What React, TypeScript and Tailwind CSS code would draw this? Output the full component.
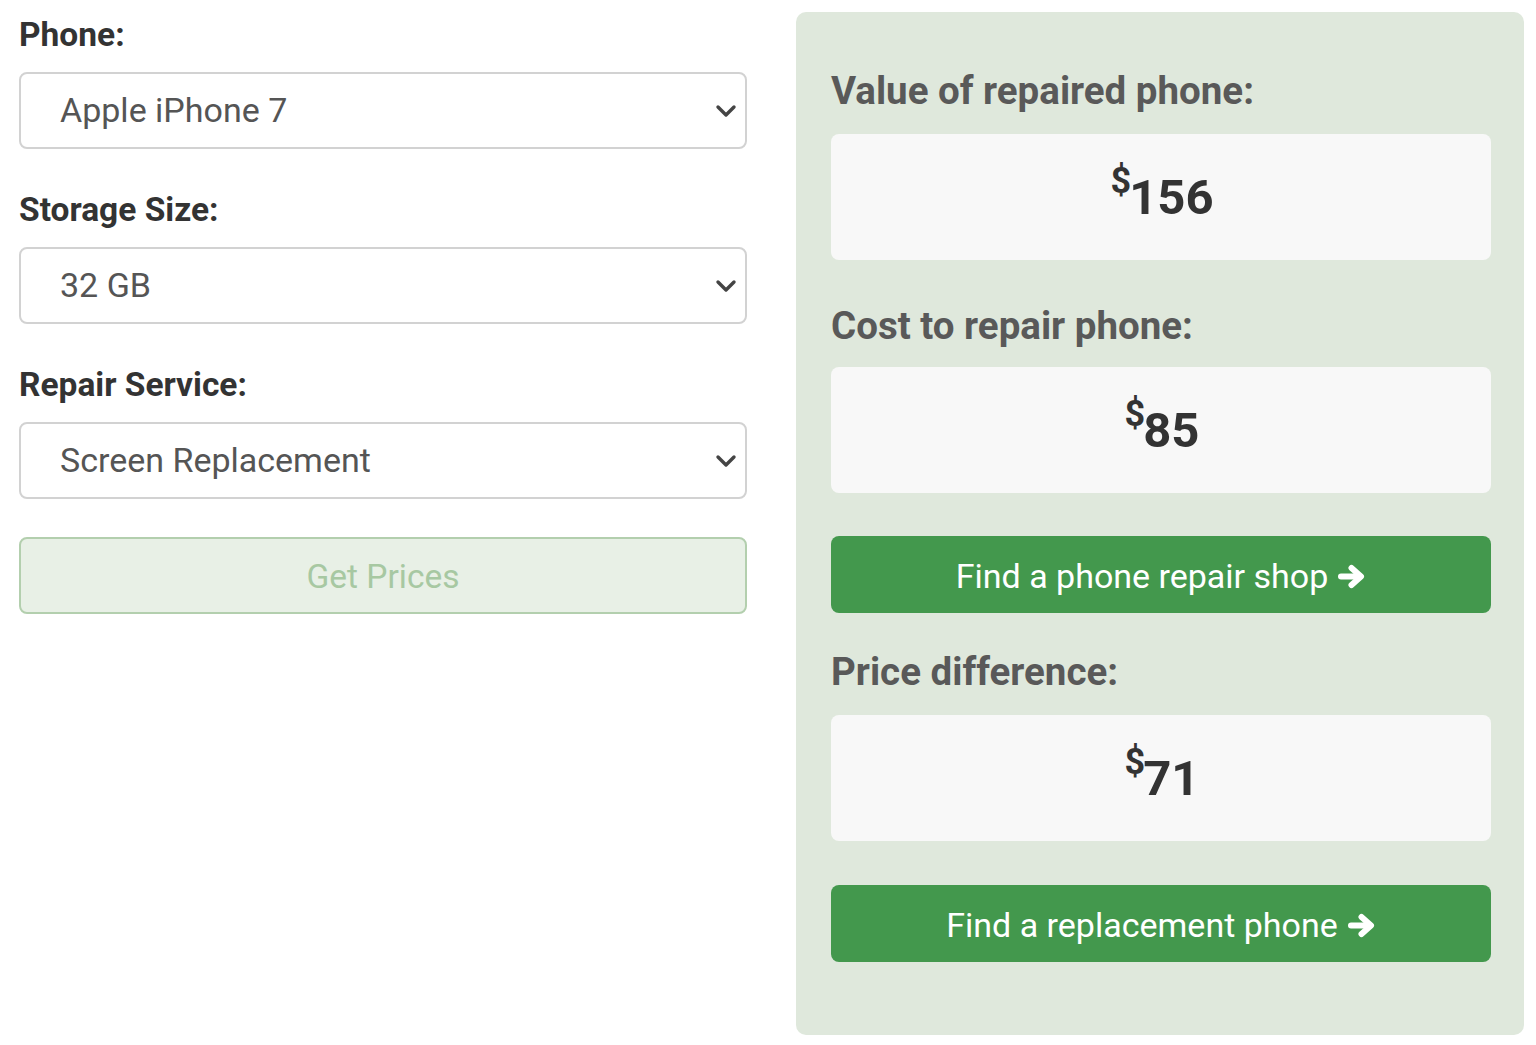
const font = { fontFamily: 'Roboto, "Liberation Sans", Arial, sans-serif' };

function Chevron() {
  return (
    <svg
      className="pointer-events-none absolute right-[10px] top-1/2 -translate-y-1/2"
      width="22"
      height="14"
      viewBox="0 0 22 14"
      fill="none"
    >
      <polyline points="3,3 11,11 19,3" stroke="#444" strokeWidth="3.4" strokeLinecap="round" strokeLinejoin="round" />
    </svg>
  );
}

function Arrow() {
  return (
    <svg width="29" height="25" viewBox="0 0 29 25" fill="none">
      <line x1="4" y1="12.5" x2="23" y2="12.5" stroke="white" strokeWidth="6" strokeLinecap="round" />
      <polyline points="14.5,4 24,12.5 14.5,21" stroke="white" strokeWidth="6" strokeLinecap="round" strokeLinejoin="round" />
    </svg>
  );
}

function SelectField({ label, value, first }: { label: string; value: string; first?: boolean }) {
  return (
    <div className={first ? '' : 'mt-[41px]'}>
      <label className="block text-[33.5px] leading-[40px] font-bold text-[#333] mb-[17px]">{label}</label>
      <div className="relative">
        <select
          defaultValue={value}
          className="w-full h-[77px] appearance-none rounded-[8px] border-2 border-[#d2d2d2] bg-white pl-[39px] pr-12 text-[34px] text-[#555] outline-none"
          style={font}
        >
          <option>{value}</option>
        </select>
        <Chevron />
      </div>
    </div>
  );
}

function ValueBox({ amount }: { amount: string }) {
  return (
    <div className="h-[126px] rounded-[8px] bg-[#f8f8f8] flex items-center justify-center text-[#333] font-bold">
      <span className="text-[36px] leading-none self-start mt-[29px] translate-x-[2px]">$</span>
      <span className="text-[49px] leading-none">{amount}</span>
    </div>
  );
}

function GreenButton({ text }: { text: string }) {
  return (
    <button className="w-full h-[77px] rounded-[8px] bg-[#43984d] text-white text-[34px] flex items-center justify-center gap-[9px] pt-[3px]">
      {text}
      <Arrow />
    </button>
  );
}

export default function App() {
  return (
    <div className="min-h-screen bg-white flex gap-[49px] pl-[19px] pt-[12px]" style={font}>
      <div className="w-[728px] pt-[3px]">
        <SelectField label="Phone:" value="Apple iPhone 7" first />
        <SelectField label="Storage Size:" value="32 GB" />
        <SelectField label="Repair Service:" value="Screen Replacement" />
        <button className="mt-[38px] w-full h-[77px] rounded-[8px] border-2 border-[#b3cfae] bg-[#e8f0e6] pt-[4px] text-[33.5px] text-[#a7c8a2]">
          Get Prices
        </button>
      </div>

      <div className="w-[728px] h-[1023px] rounded-[10px] bg-[#dfe8dc] pl-[35px] pr-[33px] pt-[58px]">
        <h3 className="text-[38.5px] leading-[42px] font-bold text-[#595959] mb-[22px]">Value of repaired phone:</h3>
        <ValueBox amount="156" />

        <h3 className="mt-[45px] text-[38.5px] leading-[42px] font-bold text-[#595959] mb-[20px]">Cost to repair phone:</h3>
        <ValueBox amount="85" />

        <div className="mt-[43px]">
          <GreenButton text="Find a phone repair shop" />
        </div>

        <h3 className="mt-[38px] text-[38.5px] leading-[42px] font-bold text-[#595959] mb-[22px]">Price difference:</h3>
        <ValueBox amount="71" />

        <div className="mt-[44px]">
          <GreenButton text="Find a replacement phone" />
        </div>
      </div>
    </div>
  );
}
